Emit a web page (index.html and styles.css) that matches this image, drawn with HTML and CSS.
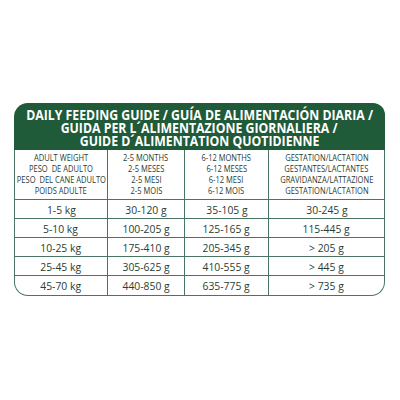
FILE: index.html
```html
<!DOCTYPE html>
<html>
<head>
<meta charset="utf-8">
<link rel="stylesheet" href="styles.css">
</head>
<body>
<div class="page">
  <div class="card">
    <div class="head">
      <span class="hl">DAILY FEEDING GUIDE / GUÍA DE ALIMENTACIÓN DIARIA /</span>
      <span class="hl">GUIDA PER L´ALIMENTAZIONE GIORNALIERA /</span>
      <span class="hl">GUIDE D´ALIMENTATION QUOTIDIENNE</span>
    </div>
    <div class="grid">
      <div class="cell th"><span class="c">ADULT WEIGHT</span><span class="c">PESO&nbsp; DE ADULTO</span><span class="c">PESO&nbsp; DEL CANE ADULTO</span><span class="c">POIDS ADULTE</span></div>
      <div class="cell th"><span class="c">2-5 MONTHS</span><span class="c">2-5 MESES</span><span class="c">2-5 MESI</span><span class="c">2-5 MOIS</span></div>
      <div class="cell th"><span class="c">6-12 MONTHS</span><span class="c">6-12 MESES</span><span class="c">6-12 MESI</span><span class="c">6-12 MOIS</span></div>
      <div class="cell th last"><span class="c">GESTATION/LACTATION</span><span class="c">GESTANTES/LACTANTES</span><span class="c">GRAVIDANZA/LATTAZIONE</span><span class="c">GESTATION/LACTATION</span></div>

      <div class="cell td"><span class="d">1-5 kg</span></div><div class="cell td"><span class="d">30-120 g</span></div><div class="cell td"><span class="d">35-105 g</span></div><div class="cell td last"><span class="d">30-245 g</span></div>
      <div class="cell td"><span class="d">5-10 kg</span></div><div class="cell td"><span class="d">100-205 g</span></div><div class="cell td"><span class="d">125-165 g</span></div><div class="cell td last"><span class="d">115-445 g</span></div>
      <div class="cell td"><span class="d">10-25 kg</span></div><div class="cell td"><span class="d">175-410 g</span></div><div class="cell td"><span class="d">205-345 g</span></div><div class="cell td last"><span class="d">&gt; 205 g</span></div>
      <div class="cell td"><span class="d">25-45 kg</span></div><div class="cell td"><span class="d">305-625 g</span></div><div class="cell td"><span class="d">410-555 g</span></div><div class="cell td last"><span class="d">&gt; 445 g</span></div>
      <div class="cell td bottom"><span class="d">45-70 kg</span></div><div class="cell td bottom"><span class="d">440-850 g</span></div><div class="cell td bottom"><span class="d">635-775 g</span></div><div class="cell td bottom last"><span class="d">&gt; 735 g</span></div>
    </div>
  </div>
</div>
</body>
</html>
```

FILE: styles.css
```css
html, body {
  margin: 0;
  padding: 0;
  background: #ffffff;
}

.page {
  width: 400px;
  height: 400px;
  padding: 103px 0 0 14px;
  box-sizing: border-box;
}

.card {
  width: 371px;
}

.head {
  background: #1f5a39;
  color: #ffffff;
  border-radius: 14px 12px 0 0;
  height: 47px;
  box-sizing: border-box;
  padding-top: 6px;
  display: flex;
  flex-direction: column;
  align-items: center;
  font-family: "Open Sans", sans-serif;
  font-weight: 700;
  font-size: 13.5px;
  line-height: 12.8px;
}

.hl {
  display: block;
  white-space: nowrap;
  transform: scaleX(0.91);
}

.grid {
  display: grid;
  grid-template-columns: 93px 77px 84px 115px;
  border: 1px solid #4a7562;
  border-top: none;
  border-radius: 0 0 14px 14px;
  color: #283d33;
  font-family: "Open Sans", sans-serif;
}

.cell {
  border-right: 1px solid #4a7562;
  border-bottom: 1px solid #4a7562;
  display: flex;
  flex-direction: column;
  align-items: center;
  justify-content: center;
}

.cell.last {
  border-right: none;
}

.cell.bottom {
  border-bottom: none;
}

.th {
  height: 50px;
  font-size: 9.2px;
  line-height: 10.8px;
  padding-top: 1px;
  box-sizing: border-box;
}

.c {
  display: block;
  white-space: nowrap;
  transform: scaleX(0.82);
}

.td {
  height: 18px;
  font-size: 11px;
}

.td.bottom {
  height: 19px;
}

.d {
  display: block;
  white-space: nowrap;
  transform: scaleX(0.94);
}
```
